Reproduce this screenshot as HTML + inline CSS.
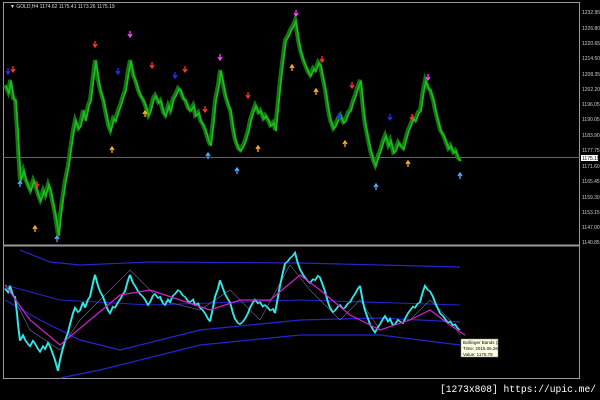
<!DOCTYPE html>
<html><head><style>
html,body{margin:0;padding:0;background:#000;width:600px;height:400px;overflow:hidden;font-family:"Liberation Sans",sans-serif}
</style></head><body>
<svg width="600" height="400" xmlns="http://www.w3.org/2000/svg" style="position:absolute;left:0;top:0">
<rect width="600" height="400" fill="#000"/>
<rect x="3.5" y="2.5" width="576" height="376" fill="none" stroke="#9a9a9a" stroke-width="1"/>
<line x1="3" y1="245.5" x2="580" y2="245.5" stroke="#9a9a9a" stroke-width="2"/>
<line x1="3" y1="157.5" x2="580" y2="157.5" stroke="#666" stroke-width="1"/>
<text x="10" y="8" fill="#ddd" font-size="5">▼ GOLD,H4  1174.62  1175.41  1173.26  1175.19</text>
<g fill="#ccc" font-size="5">
<text x="582" y="14">1232.95</text><text x="582" y="30">1226.80</text><text x="582" y="45">1220.65</text>
<text x="582" y="60">1214.50</text><text x="582" y="76">1208.35</text><text x="582" y="91">1202.20</text>
<text x="582" y="106">1196.05</text><text x="582" y="121">1190.05</text><text x="582" y="137">1183.90</text>
<text x="582" y="152">1177.75</text><text x="582" y="168">1171.60</text><text x="582" y="183">1165.45</text>
<text x="582" y="199">1159.30</text><text x="582" y="214">1153.15</text><text x="582" y="229">1147.00</text>
<text x="582" y="244">1140.85</text>
</g>
<rect x="581" y="155" width="17" height="6" fill="#fff"/>
<text x="582" y="160" fill="#000" font-size="5">1175.19</text>
<defs>
<polyline id="p" points="5,85 8,92 10,80 13,98 15,100 17,130 18,150 20,180 23,170 25,178 28,186 30,190 33,180 35,185 38,195 40,200 43,190 45,195 48,184 50,190 53,205 55,215 58,235 60,215 62,200 65,180 68,165 70,150 73,130 75,120 78,128 80,125 83,110 85,120 88,105 90,100 93,75 95,60 98,80 100,90 103,100 105,110 108,125 110,130 113,118 115,120 118,110 120,105 123,95 125,90 128,70 130,60 133,75 135,80 138,90 140,95 143,100 145,105 148,115 150,110 153,98 155,95 158,102 160,100 163,112 165,115 168,105 170,110 173,98 175,95 178,88 180,90 183,98 185,100 188,108 190,110 193,105 195,115 198,112 200,120 203,125 205,130 208,140 210,145 213,120 215,100 218,85 220,70 223,85 225,95 228,105 230,110 233,130 235,140 238,148 240,150 243,145 245,140 248,130 250,120 253,110 255,105 258,112 260,110 263,118 265,115 268,120 270,125 273,122 275,130 278,100 280,80 283,55 285,40 288,35 290,30 293,25 295,20 298,40 300,50 303,60 305,65 308,72 310,75 313,68 315,70 318,62 320,65 323,80 325,90 328,110 330,120 333,128 335,125 338,118 340,115 343,122 345,120 348,112 350,110 353,100 355,95 358,85 360,80 363,110 365,125 368,140 370,150 373,160 375,165 378,155 380,150 383,140 385,135 388,145 390,140 393,152 395,150 398,142 400,145 403,148 405,140 408,130 410,125 413,118 415,120 418,112 420,110 423,90 425,80 428,88 430,90 433,100 435,110 438,122 440,130 443,135 445,140 448,148 450,145 453,152 455,150 458,158 460,160"/>
<path id="ad" d="M0,-4V1M-2,-1L0,2L2,-1" stroke-width="1.3" fill="none"/>
<path id="au" d="M0,4V-1M-2,1L0,-2L2,1" stroke-width="1.3" fill="none"/>
</defs>
<use href="#p" fill="none" stroke="#0e7a0e" stroke-width="4"/>
<use href="#p" fill="none" stroke="#22bb22" stroke-width="1.6" transform="translate(1,1)"/>
<g stroke="#ff3030">
<use href="#ad" x="13" y="70"/><use href="#ad" x="95" y="45"/><use href="#ad" x="152" y="66"/><use href="#ad" x="185" y="70"/>
<use href="#ad" x="248" y="96"/><use href="#ad" x="322" y="60"/><use href="#ad" x="352" y="86"/><use href="#ad" x="412" y="118"/>
<use href="#ad" x="37" y="185"/><use href="#ad" x="205" y="110"/>
</g>
<g stroke="#ff40ff">
<use href="#ad" x="130" y="35"/><use href="#ad" x="220" y="58"/><use href="#ad" x="296" y="14"/><use href="#ad" x="428" y="78"/>
</g>
<g stroke="#ffb020">
<use href="#au" x="35" y="228"/><use href="#au" x="112" y="149"/><use href="#au" x="145" y="113"/><use href="#au" x="258" y="148"/>
<use href="#au" x="292" y="67"/><use href="#au" x="316" y="91"/><use href="#au" x="345" y="143"/><use href="#au" x="408" y="163"/>
</g>
<g stroke="#4ab0ff">
<use href="#au" x="57" y="238"/><use href="#au" x="237" y="170"/><use href="#au" x="376" y="186"/><use href="#au" x="460" y="175"/>
<use href="#au" x="208" y="155"/><use href="#au" x="20" y="183"/>
</g>
<g stroke="#2a2aff">
<use href="#ad" x="8" y="72"/><use href="#ad" x="118" y="72"/><use href="#ad" x="175" y="76"/><use href="#ad" x="339" y="117"/><use href="#ad" x="390" y="118"/>
</g>
<polyline fill="none" stroke="#2525d0" stroke-width="1.2" points="20,250 50,262 80,265 150,262 300,263 460,267"/>
<polyline fill="none" stroke="#2525d0" stroke-width="1.2" points="5,300 40,320 80,340 120,350 200,330 300,320 380,318 460,322"/>
<polyline fill="none" stroke="#2525d0" stroke-width="1.2" points="60,378 100,370 200,345 300,335 380,335 460,345"/>
<polyline fill="none" stroke="#2525d0" stroke-width="1" points="5,285 60,300 150,305 300,300 460,305"/>
<polyline fill="none" stroke="#7070a0" stroke-width="0.6" points="10,290 30,330 60,350 80,320 100,300 130,270 160,300 200,310 230,290 260,320 290,265 310,290 340,320 360,300 380,330 410,320 430,300 450,320 460,335"/>
<g transform="translate(0,250) scale(1,0.55) translate(0,-15)">
<use href="#p" fill="none" stroke="#30e8e8" stroke-width="2" vector-effect="non-scaling-stroke"/>
</g>
<polyline fill="none" stroke="#d020d0" stroke-width="1.2" points="5,285 30,320 60,345 90,320 120,295 150,290 180,300 210,310 240,300 270,300 300,275 320,290 350,315 380,330 410,320 430,310 450,325 465,335"/>
<rect x="461" y="339" width="37" height="18" fill="#ffffe1" stroke="#888" stroke-width="0.5"/>
<g font-size="4.5" fill="#000"><text x="463" y="344">Bollinger Bands (21)</text><text x="463" y="350">Time: 2015.06.26 17:00</text><text x="463" y="356">Value: 1175.78</text></g>
<text x="440" y="392" fill="#fff" font-size="10" font-family="Liberation Mono,monospace" textLength="156" lengthAdjust="spacingAndGlyphs">[1273x808] https://upic.me/</text>
</svg>
</body></html>
